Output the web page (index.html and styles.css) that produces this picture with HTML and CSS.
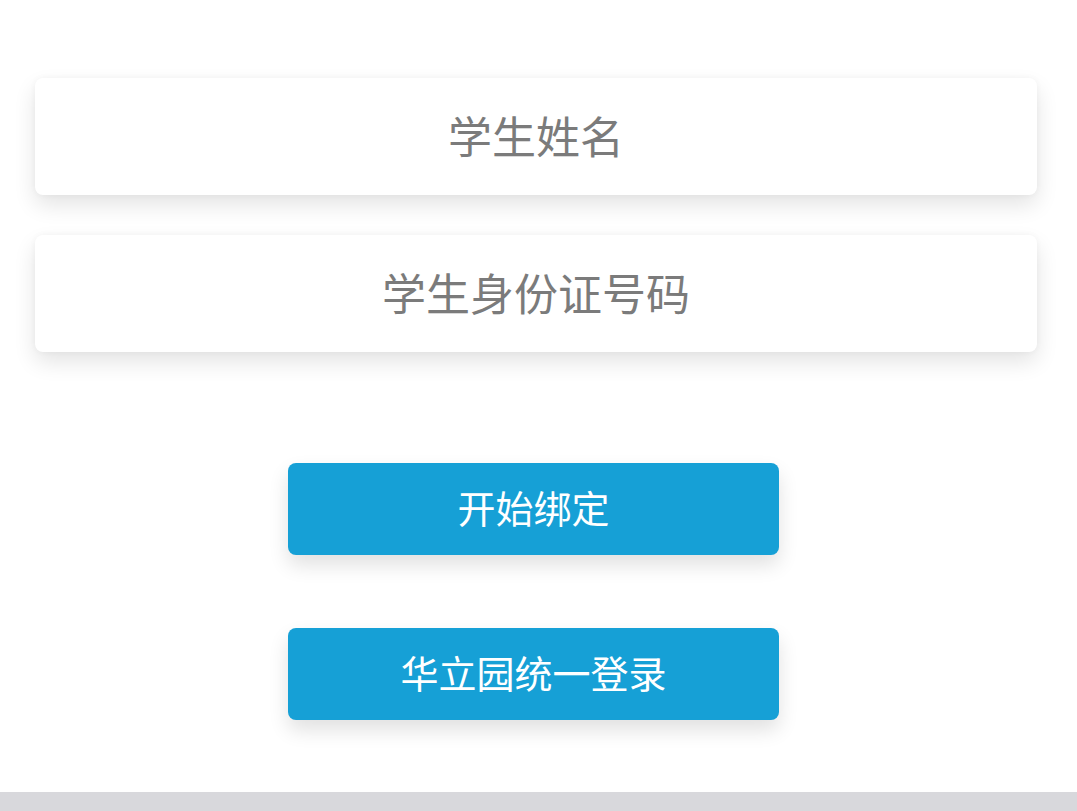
FILE: index.html
```html
<!DOCTYPE html>
<html lang="zh">
<head>
<meta charset="utf-8">
<link rel="stylesheet" href="styles.css">
</head>
<body>
<main class="page">
  <section class="fields">
    <div class="field">学生姓名</div>
    <div class="field">学生身份证号码</div>
  </section>
  <section class="actions">
    <button class="btn">开始绑定</button>
    <button class="btn btn-second">华立园统一登录</button>
  </section>
</main>
<footer class="bottom-bar"></footer>
</body>
</html>
```

FILE: styles.css
```css
html, body {
  margin: 0;
  padding: 0;
  background: #ffffff;
  font-family: "Noto Sans CJK SC", "Noto Sans", sans-serif;
}
body {
  width: 1077px;
  height: 811px;
  overflow: hidden;
  display: flex;
  flex-direction: column;
}
.page {
  flex: 1;
  padding: 78px 40px 0 35px;
  display: flex;
  flex-direction: column;
}
.fields {
  display: flex;
  flex-direction: column;
  gap: 40px;
}
.field {
  height: 117px;
  box-sizing: border-box;
  padding-bottom: 4px;
  background: #ffffff;
  border-radius: 8px;
  box-shadow: 0 10px 22px rgba(0, 0, 0, 0.11), 0 0 6px rgba(0, 0, 0, 0.04);
  display: flex;
  align-items: center;
  justify-content: center;
  color: #7b7b7b;
  font-size: 44px;
}
.actions {
  margin-top: 111px;
  display: flex;
  flex-direction: column;
  align-items: center;
  gap: 73px;
  padding-right: 5px;
}
.btn {
  width: 491px;
  height: 92px;
  box-sizing: border-box;
  border: none;
  border-radius: 8px;
  background: #16a0d6;
  color: #ffffff;
  font-family: "Noto Sans CJK SC", "Noto Sans", sans-serif;
  font-size: 38px;
  box-shadow: 0 10px 20px rgba(0, 0, 0, 0.12);
  display: flex;
  align-items: center;
  justify-content: center;
  padding: 0 0 5px 0;
}
.bottom-bar {
  height: 19px;
  background: #d8d8dc;
}
```
